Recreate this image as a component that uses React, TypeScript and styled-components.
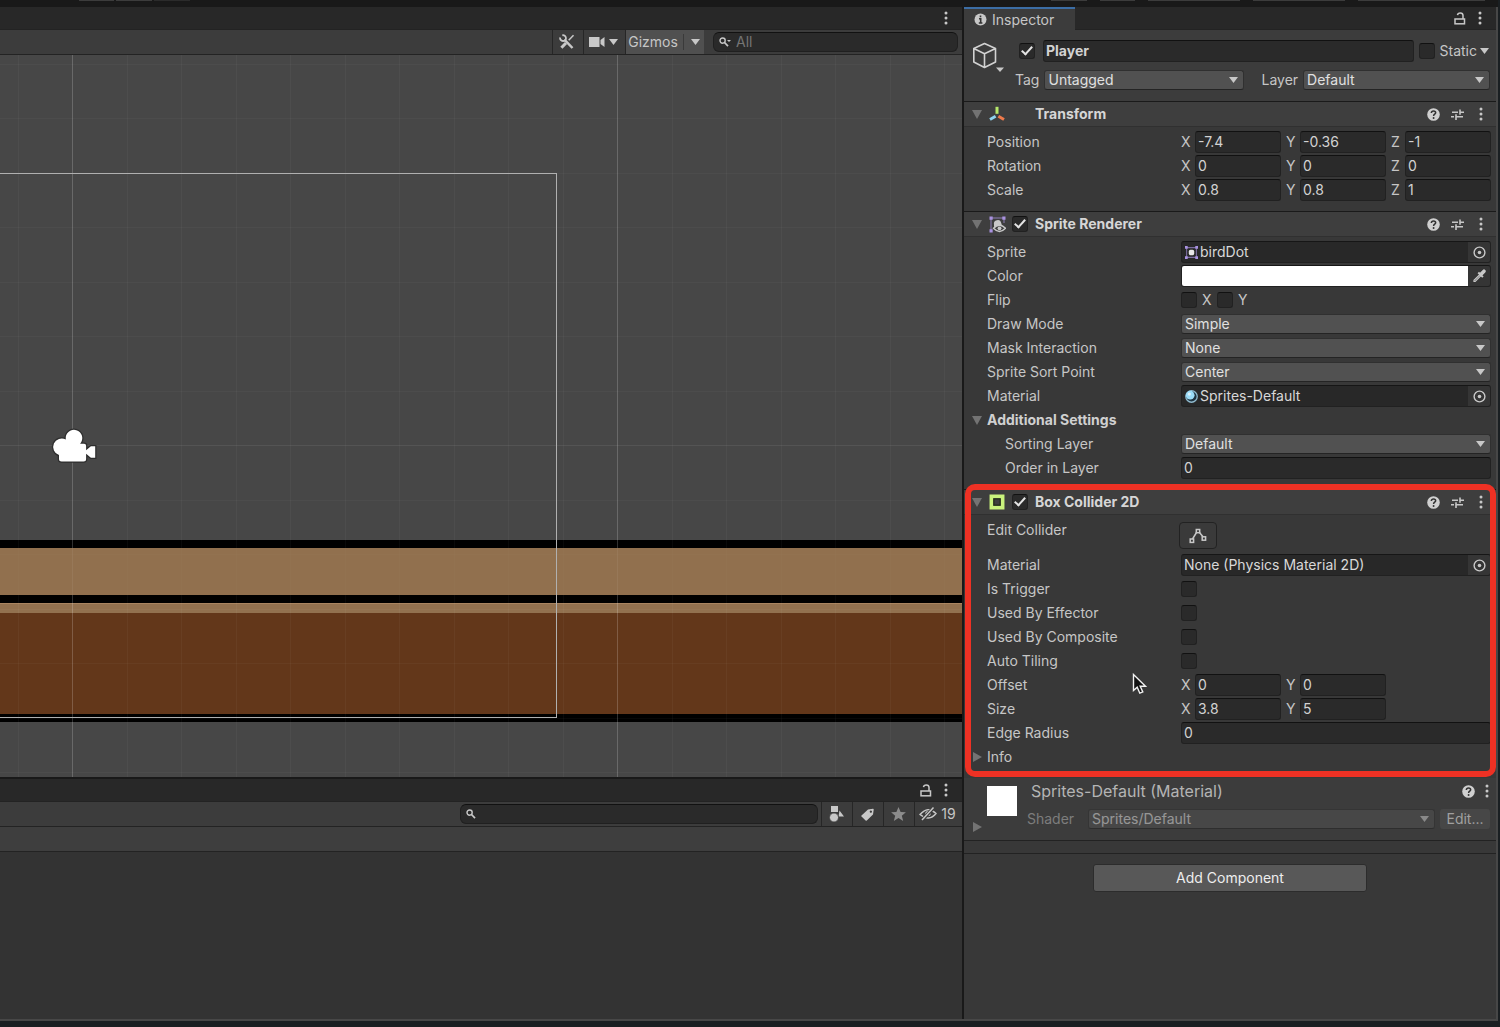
import React from "react";
import styled, { createGlobalStyle } from "styled-components";

const GlobalStyle = createGlobalStyle`
  *, *::before, *::after { box-sizing: border-box; }
  body {
    margin: 0;
    background: #1a1f22;
    color: #c6c6c6;
    font: 14px/20px Inter, "Liberation Sans", sans-serif;
  }
  button, input, select { font: inherit; color: inherit; margin: 0; }
  svg { display: block; flex: none; }
`;

/* ---------- window frame ---------- */

const Window = styled.div`
  display: flex;
  flex-direction: column;
  min-height: 100vh;
  padding: 0 2px 6px 0;
`;

const MainToolbar = styled.header`
  display: flex;
  justify-content: space-between;
  height: 7px;
  background: #191919;
  padding: 0 13px 0 79px;
`;

const ToolbarGroup = styled.div<{ $gap: number }>`
  display: flex;
  gap: ${(p) => p.$gap}px;
`;

const ToolbarStub = styled.span<{ $width: number; $dim?: boolean }>`
  width: ${(p) => p.$width}px;
  height: 1px;
  background: ${(p) => (p.$dim ? "#2b2b2b" : "#3c3c3c")};
`;

const Workspace = styled.main`
  flex: 1;
  display: grid;
  grid-template-columns: minmax(0, 1fr) 532px;
  gap: 2px;
  background: #191919;
  border: solid #474747;
  border-width: 0 2px 2px 0;
`;

const LeftColumn = styled.div`
  display: grid;
  grid-template-rows: minmax(0, 1fr) 240px;
  gap: 2px;
`;

const Panel = styled.section`
  display: flex;
  flex-direction: column;
  min-width: 0;
  background: #383838;
`;

const TabBar = styled.div`
  display: flex;
  align-items: center;
  justify-content: flex-end;
  gap: 4px;
  height: 23px;
  padding-right: 8px;
  background: #282828;
  border-bottom: 1px solid #232323;
`;

const Tab = styled.div`
  display: flex;
  align-items: center;
  gap: 5px;
  align-self: stretch;
  width: 111px;
  margin-right: auto;
  margin-bottom: -1px;
  padding-left: 10px;
  background: #3c3c3c;
  border-top: 2px solid #3c6ea6;
`;

const Toolbar = styled.div`
  display: flex;
  justify-content: flex-end;
  height: 25px;
  background: #3c3c3c;
  border-bottom: 1px solid #232323;
`;

const ToolButton = styled.button<{ $width: number; $on?: boolean }>`
  display: flex;
  align-items: center;
  justify-content: center;
  gap: 4px;
  width: ${(p) => p.$width}px;
  padding: 0 2px 0 0;
  border: 0;
  border-left: 1px solid #262626;
  background: ${(p) => (p.$on ? "#505050" : "transparent")};
`;

const Divider = styled.span`
  width: 1px;
  height: 16px;
  margin: 0 3px 0 1px;
  background: #3a3a3a;
`;

const SearchBox = styled.label<{ $width: number; $right: number }>`
  display: flex;
  align-items: center;
  gap: 5px;
  width: ${(p) => p.$width}px;
  height: 20px;
  margin: 2px ${(p) => p.$right}px 0 9px;
  padding: 0 5px;
  border: 1px solid #202020;
  border-top-color: #111;
  border-radius: 6px;
  background: #2a2a2a;
  input {
    flex: 1;
    min-width: 0;
    padding: 0;
    border: 0;
    outline: 0;
    background: transparent;
  }
  input::placeholder { color: #757575; opacity: 1; }
`;

const IconButton = styled.button`
  display: flex;
  align-items: center;
  justify-content: center;
  width: 16px;
  height: 16px;
  padding: 0;
  border: 0;
  background: none;
`;

const SceneCanvas = styled.div`
  flex: 1;
  min-height: 0;
  background: #474747;
  overflow: hidden;
`;

const Breadcrumbs = styled.div`
  height: 25px;
  background: #3e3e3e;
  border-bottom: 1px solid #232323;
`;

const AssetList = styled.div`
  flex: 1;
  background: #333;
`;

/* ---------- form controls ---------- */

const TextInput = styled.input<{ $strong?: boolean }>`
  flex: 1;
  width: 100%;
  min-width: 0;
  height: 22px;
  padding: 0 2px 2px;
  border: 1px solid #212121;
  border-top-color: #111;
  border-radius: 3px;
  outline: 0;
  background: #2a2a2a;
  color: #d2d2d2;
  font-weight: ${(p) => (p.$strong ? 700 : 400)};
`;

const CheckBox = styled.input.attrs({ type: "checkbox" })`
  appearance: none;
  display: flex;
  flex: none;
  justify-content: center;
  width: 16px;
  height: 16px;
  border: 1px solid #212121;
  border-top-color: #111;
  border-radius: 3px;
  background: #2a2a2a;
  &:checked::after {
    content: "";
    width: 6px;
    height: 11px;
    border: solid #e4e4e4;
    border-width: 0 2px 2px 0;
    transform: rotate(42deg);
  }
`;

const SelectWrap = styled.span<{ $grow?: number; $dim?: boolean }>`
  display: grid;
  flex: ${(p) => p.$grow ?? 1} 1 0;
  align-items: center;
  min-width: 0;
  opacity: ${(p) => (p.$dim ? 0.55 : 1)};
  > * { grid-area: 1 / 1; }
  > svg { justify-self: end; margin-right: 6px; pointer-events: none; }
`;

const SelectBox = styled.select`
  appearance: none;
  width: 100%;
  height: 20px;
  padding: 0 20px 0 3px;
  border: 1px solid #303030;
  border-bottom-color: #242424;
  border-radius: 3px;
  outline: 0;
  background: #515151;
  color: #e0e0e0;
  line-height: 18px;
  opacity: 1;
`;

const FieldBox = styled.span`
  display: flex;
  flex: 1;
  align-items: center;
  height: 22px;
  border: 1px solid #212121;
  border-top-color: #161616;
  border-radius: 3px;
  background: #282828;
  overflow: hidden;
  > svg { margin-left: 3px; }
  > input[type="text"] {
    flex: 1;
    min-width: 0;
    padding: 0 2px;
    border: 0;
    outline: 0;
    background: transparent;
    color: #d8d8d8;
  }
`;

const PickerButton = styled.button`
  display: flex;
  align-items: center;
  justify-content: center;
  width: 22px;
  height: 20px;
  padding: 0;
  border: 0;
  background: #353535;
`;

const ColorInput = styled.input.attrs({ type: "color" })`
  appearance: none;
  flex: 1;
  min-width: 0;
  height: 20px;
  padding: 0;
  border: 0;
  background: #fff;
  &::-webkit-color-swatch-wrapper { padding: 0; }
  &::-webkit-color-swatch { border: 0; }
`;

const WideButton = styled.button`
  width: 274px;
  height: 28px;
  margin: 10px auto 0;
  padding: 0;
  border: 1px solid #2c2c2c;
  border-radius: 3px;
  background: #585858;
  color: #eee;
`;

const ShapeButton = styled.button`
  display: flex;
  align-items: center;
  justify-content: center;
  width: 38px;
  height: 27px;
  margin: 4px 0 0 -2px;
  padding: 0;
  border: 1px solid #222;
  border-radius: 4px;
  background: #3a3a3a;
`;

const EditButton = styled.button`
  width: 50px;
  height: 20px;
  padding: 0;
  border: 0;
  border-radius: 3px;
  background: #474747;
  color: #a0a0a0;
`;

/* ---------- inspector ---------- */

const ObjectHeader = styled.div`
  display: flex;
  gap: 9px;
  padding: 10px 6px 11px 8px;
  background: #3c3c3c;
`;

const ObjectIcon = styled.button`
  display: flex;
  width: 34px;
  height: 34px;
  padding: 0;
  border: 0;
  background: none;
`;

const ObjectFields = styled.div`
  flex: 1;
  display: grid;
  gap: 8px;
`;

const ObjectRow = styled.div`
  display: flex;
  align-items: center;
  gap: 5px;
`;

const NameRow = styled(ObjectRow)`
  padding: 0 1px 0 4px;
  > input:first-child { margin-right: 3px; }
`;

const ObjectLabel = styled.label<{ $before?: number }>`
  display: flex;
  align-items: center;
  gap: 3px;
  margin-left: ${(p) => p.$before ?? 0}px;
`;

const ComponentBox = styled.section`
  position: relative;
  padding-bottom: 9px;
`;

const ComponentHeader = styled.div`
  display: flex;
  align-items: center;
  gap: 7px;
  height: 26px;
  margin-bottom: 3px;
  padding: 0 7px 0 8px;
  background: #3e3e3e;
  border-top: 1px solid #1a1a1a;
  border-bottom: 1px solid #303030;
`;

const ComponentTitle = styled.h2`
  flex: 1;
  margin: 0;
  font-size: 14px;
  font-weight: 700;
  color: #d6d6d6;
`;

const Slot = styled.span`
  display: flex;
  width: 16px;
`;

const HeaderActions = styled.span<{ $gap: number }>`
  display: flex;
  gap: ${(p) => p.$gap}px;
`;

const Row = styled.div<{ $height?: number }>`
  display: grid;
  grid-template-columns: 194px minmax(0, 1fr);
  height: ${(p) => p.$height ?? 24}px;
  padding: 0 5px 0 23px;
`;

const RowLabel = styled.label<{ $indent?: boolean }>`
  padding-left: ${(p) => (p.$indent ? 18 : 0)}px;
  line-height: 24px;
`;

const RowValue = styled.div`
  display: flex;
  align-items: center;
`;

const Vector = styled.div`
  flex: 1;
  display: grid;
  grid-template-columns: repeat(3, minmax(0, 1fr));
  gap: 5px;
`;

const Axis = styled.label`
  display: grid;
  grid-template-columns: 14px minmax(0, 1fr);
  align-items: center;
`;

const FlipLabel = styled.label`
  display: flex;
  align-items: center;
  gap: 5px;
  width: 36px;
`;

const Foldout = styled.button<{ $strong?: boolean }>`
  display: flex;
  align-items: center;
  gap: 5px;
  width: 100%;
  height: 24px;
  padding: 0 8px;
  border: 0;
  background: none;
  text-align: left;
  font-weight: ${(p) => (p.$strong ? 700 : 400)};
  color: ${(p) => (p.$strong ? "#d0d0d0" : "#c6c6c6")};
`;

const Highlight = styled.div`
  position: absolute;
  inset: -5px 0 1px 1px;
  border: 6px solid #ee3124;
  border-radius: 10px;
  pointer-events: none;
`;

const Pointer = styled.svg`
  position: absolute;
  left: 168px;
  top: 184px;
`;

const MaterialHeader = styled.section`
  display: grid;
  grid-template-columns: 46px minmax(0, 1fr);
  height: 63px;
  padding: 3px 1px 0 8px;
  gap: 9px;
  background: #3c3c3c;
  border-bottom: 1px solid #222;
`;

const Preview = styled.div`
  display: flex;
  flex-direction: column;
  gap: 6px;
  padding-top: 5px;
`;

const Swatch = styled.span`
  width: 30px;
  height: 30px;
  margin-left: 15px;
  background: #fff;
`;

const MaterialInfo = styled.div`
  display: grid;
  align-content: start;
  gap: 8px;
`;

const MaterialTitle = styled.h2`
  display: flex;
  align-items: center;
  justify-content: space-between;
  margin: 0;
  padding-left: 4px;
  font-size: 16px;
  font-weight: 400;
  color: #b4b4b4;
`;

const ShaderRow = styled.div`
  display: grid;
  grid-template-columns: 56px minmax(0, 1fr) auto;
  gap: 5px;
  align-items: center;
  padding-right: 5px;
`;

const ShaderLabel = styled.label`
  color: #7d7d7d;
`;

const Gap = styled.div`
  height: 13px;
  border-bottom: 1px solid #222;
`;

/* ---------- icons ---------- */

const light = "#c8c8c8";

const Caret = ({ size = 9 }: { size?: number }) => (
  <svg width={size} height="6" viewBox="0 0 10 6" preserveAspectRatio="none">
    <path d="M0 0h10L5 6z" fill={light} />
  </svg>
);

const FoldArrow = ({ open = true }: { open?: boolean }) => (
  <svg width="10" height="10" viewBox="0 0 10 10">
    <path d={open ? "M0 1h10L5 10z" : "M1 0v10l9-5z"} fill="#737373" />
  </svg>
);

const Dots = () => (
  <svg width="4" height="14" viewBox="0 0 4 14" fill={light}>
    <circle cx="2" cy="2" r="1.5" />
    <circle cx="2" cy="7" r="1.5" />
    <circle cx="2" cy="12" r="1.5" />
  </svg>
);

const Lock = () => (
  <svg width="12" height="13" viewBox="0 0 12 13" fill="none" stroke={light} strokeWidth="1.5">
    <rect x="1" y="7" width="9.5" height="4.8" />
    <path d="M9 7V3.6C9 1.9 8 1 6.3 1 4.600 1 3.700 1.700 3.500 3.100" />
  </svg>
);

const Info = () => (
  <svg width="13" height="13" viewBox="0 0 13 13">
    <circle cx="6.500" cy="6.500" r="6" fill={light} />
    <path d="M6.500 2.500v1.800M5 5.800h1.700v4M4.800 10h3.600" stroke="#333" strokeWidth="1.600" fill="none" />
  </svg>
);

const Help = () => (
  <svg width="13" height="13" viewBox="0 0 12 12">
    <circle cx="6" cy="6" r="5.800" fill="#d0d0d0" />
    <path d="M4 4.600C4.100 3.300 4.900 2.700 6 2.700s2 .7 2 1.700c0 1.300-1.900 1.400-1.900 2.900" stroke="#333" strokeWidth="1.400" fill="none" />
    <circle cx="6.100" cy="9.200" r=".9" fill="#333" />
  </svg>
);

const Presets = () => (
  <svg width="13" height="13" viewBox="0 0 13 13" stroke={light} strokeWidth="1.600" fill="none">
    <path d="M1 4.200h6M9 4.200h4M9 1.500v5.200M0 8.700h3M5 8.700h7M5 6.200v5.800" />
  </svg>
);

const SearchIcon = ({ menu }: { menu?: boolean }) => (
  <svg width="12" height="10" viewBox="0 0 12 10" fill="none" stroke={light}>
    <circle cx="3.600" cy="3.600" r="2.600" strokeWidth="1.400" />
    <path d="M5.500 5.500L9 9.200" strokeWidth="1.700" />
    {menu && <path d="M8 3h4l-2 2z" fill={light} stroke="none" />}
  </svg>
);

const Tools = () => (
  <svg width="16" height="16" viewBox="0 0 16 16" fill="none" stroke={light}>
    <path d="M14.500 1.200L9.700 6.200" strokeWidth="1.500" />
    <path d="M7 9L2.400 13.800" strokeWidth="3" />
    <path d="M5.400 5.600L13.500 14" strokeWidth="2.500" />
    <path d="M3.300 1.300A2.900 2.900 0 1 1 1.200 3.500" strokeWidth="1.800" />
  </svg>
);

const VideoIcon = () => (
  <svg width="16" height="12" viewBox="0 0 16 12" fill={light}>
    <path d="M0 1h10.500v10H0zM11.500 4L15.500 1v10L11.500 8z" />
  </svg>
);

const Shapes = () => (
  <svg width="15" height="17" viewBox="0 0 15 17" fill={light}>
    <path d="M2 0h7v6H2zM10.500 4.500L15 10.500h-5.500z" />
    <circle cx="5" cy="11.500" r="4.500" stroke="#3c3c3c" strokeWidth=".8" />
  </svg>
);

const Tag = () => (
  <svg width="13" height="13" viewBox="0 0 13 13">
    <path fillRule="evenodd" d="M7 1.500L12 .8q.8 0 .7.900L12 6.500 5.800 12.600q-.6.500-1.200 0L.5 8.600q-.6-.6 0-1.200zM9.800 2.500a1.100 1.100 0 1 0 .1 0z" fill={light} />
  </svg>
);

const Star = () => (
  <svg width="15" height="14" viewBox="0 0 15 14">
    <path d="M7.500 0l2.100 4.900 5.300.4-4.100 3.500L12.200 14l-4.700-2.900L2.800 14l1.400-5.200L.1 5.300l5.300-.4z" fill="#8c8c8c" />
  </svg>
);

const HiddenEye = () => (
  <svg width="18" height="14" viewBox="0 0 18 14" fill="none" stroke={light}>
    <path d="M1 7.500Q9-1.500 17 6.500 10 15 1 7.500z" strokeWidth="1.400" />
    <circle cx="9" cy="6.600" r="2.700" fill={light} stroke="none" />
    <path d="M3 13.200L14.500.8" stroke="#3c3c3c" strokeWidth="3.500" />
    <path d="M3 13L14.500.6" strokeWidth="1.500" />
  </svg>
);

const Cube = () => (
  <svg width="34" height="34" viewBox="0 0 34 34" fill="none" stroke="#d2d2d2" strokeWidth="1.600" strokeLinejoin="round">
    <path d="M12.500 3.500L23.500 8.500v13.500L12.500 27.500 1.800 22V8.500zM1.800 8.500l10.700 5.300 11-5.300M12.500 13.800v13.700" />
    <path d="M24 27.500h8l-4 4.500z" fill={light} stroke="none" />
  </svg>
);

const TransformIcon = () => (
  <svg width="16" height="16" viewBox="0 0 16 16" strokeWidth="3" fill="none">
    <path d="M8 .8v7" stroke="#b7e86b" />
    <path d="M6.600 10.300L1 13.500" stroke="#8fd3ee" />
    <path d="M9.400 10.300l5.600 3.200" stroke="#ee7a4b" />
  </svg>
);

const SpriteRendererIcon = () => (
  <svg width="17" height="17" viewBox="0 0 17 17" fill="none">
    <path d="M2 2h13M2 2v13M15 2v5" stroke="#8d7fb5" />
    <path d="M.5.500h3.200v3.200H.5zM13.300.500h3.200v3.200h-3.200zM.5 13.300h3.200v3.200H.5z" fill="#a992e0" />
    <path d="M5 8.500a3.600 3.600 0 0 1 7.200-1.500L13 9.500 5 11z" fill={light} />
    <path d="M4.500 12.300q6-6.300 12 0-6 6.300-12 0z" fill="#3e3e3e" stroke={light} strokeWidth="1.500" />
    <circle cx="10.500" cy="12.300" r="1.900" fill={light} />
  </svg>
);

const SpriteIcon = () => (
  <svg width="13" height="13" viewBox="0 0 12 12">
    <path d="M1.500 1.500h9v9h-9z" stroke="#7a6c9e" fill="none" />
    <path d="M0 0h2.500v2.500H0zM9.500 0H12v2.500H9.500zM0 9.500h2.500V12H0zM9.500 9.500H12V12H9.500z" fill="#a992e0" />
    <rect x="3.500" y="3.500" width="5" height="5" rx="1.500" fill="#e8e8e8" />
  </svg>
);

const MaterialIcon = () => (
  <svg width="13" height="13" viewBox="0 0 12 12">
    <circle cx="6" cy="6" r="5.300" fill="#1f3440" stroke="#8fb9cd" strokeWidth="1.200" />
    <circle cx="4.800" cy="4.800" r="4" fill="#9adcf8" />
    <circle cx="4" cy="3.800" r="1.500" fill="#d8f2fd" />
  </svg>
);

const BoxColliderIcon = () => (
  <svg width="16" height="16" viewBox="0 0 15 15">
    <path fillRule="evenodd" d="M.5.500h14v14H.5zM4 4v7h7V4z" fill="#c9f27c" />
    <rect x="4" y="4" width="7" height="7" fill="#26301a" />
    <rect x="5.200" y="5.200" width="4.600" height="4.600" fill="#3e3e3e" />
  </svg>
);

const Target = () => (
  <svg width="13" height="13" viewBox="0 0 13 13">
    <circle cx="6.500" cy="6.500" r="5.400" fill="none" stroke={light} strokeWidth="1.400" />
    <circle cx="6.500" cy="6.500" r="1.800" fill={light} />
  </svg>
);

const Dropper = () => (
  <svg width="14" height="14" viewBox="0 0 14 14" fill="none">
    <path d="M8.200 5.200L2 11.200V12.500h1.200L9.200 6.300" stroke={light} strokeWidth="1.200" />
    <path d="M6.300 3.500l4.600 4.600" stroke={light} strokeWidth="2" />
    <path d="M9 5.300L12 2.200" stroke={light} strokeWidth="3.500" strokeLinecap="round" />
  </svg>
);

const EditShape = () => (
  <svg width="18" height="16" viewBox="0 0 18 16" fill="none" stroke={light} strokeWidth="1.500">
    <path d="M7.500 4.500L3.500 11M10.500 4.500l3.700 4.500" />
    <rect x="7.300" y="1.500" width="3.400" height="3.200" />
    <rect x="1.200" y="11" width="3.400" height="3.400" />
    <rect x="13.200" y="8.800" width="3.400" height="3.400" />
  </svg>
);

/* ---------- scene drawing ---------- */

const columns = Array.from({ length: 60 }, (_, i) => 18 + i * 54.5);
const lines = Array.from({ length: 40 }, (_, i) => 9 + i * 54.5);

const SceneDrawing = () => (
  <svg width="100%" height="100%" role="img" aria-label="Scene" shapeRendering="crispEdges">
    <rect y="485" width="100%" height="182" fill="#000" />
    <rect y="493" width="100%" height="47" fill="#92714f" />
    <rect y="548" width="100%" height="10" fill="#92714f" />
    <rect y="548" width="100%" height="1" fill="#a88460" />
    <rect y="558" width="100%" height="101" fill="#63371a" />
    {columns.map((x, i) => (
      <rect key={x} x={Math.floor(x)} width="1" height="100%" fill="#fff" fillOpacity={i % 10 === 1 ? 0.19 : 0.035} />
    ))}
    {lines.map((y, i) => (
      <rect key={y} y={Math.floor(y)} width="100%" height="1" fill="#fff" fillOpacity={i === 7 ? 0.07 : 0.03} />
    ))}
    <rect y="493" width="100%" height="47" fill="#92714f" fillOpacity=".7" />
    <rect x="-20" y="118.500" width="576.500" height="544" fill="none" stroke="#b0b0b0" />
    <g shapeRendering="auto" stroke="#2e2e2e" strokeWidth="2.500" paintOrder="stroke" fill="#fff">
      <path d="M59 400a8.500 8.500 0 1 1 6.800-15.500 8.300 8.300 0 1 1 14.300 4.200h4q2 0 2 2v4.500l4.800-4h4.300v11.500h-4.300l-4.800-4v5.300q0 2.500-2.500 2.500H61.500q-2.500 0-2.500-2.500z" />
    </g>
  </svg>
);

/* ---------- composite parts ---------- */

type SelectProps = { id: string; value: string; grow?: number; dim?: boolean };

const Select = ({ id, value, grow, dim }: SelectProps) => (
  <SelectWrap $grow={grow} $dim={dim}>
    <SelectBox id={id} defaultValue={value}>
      <option>{value}</option>
    </SelectBox>
    <Caret />
  </SelectWrap>
);

type HeaderProps = { title: string; icon: React.ReactNode; toggle?: boolean };

const Header = ({ title, icon, toggle }: HeaderProps) => (
  <ComponentHeader>
    <FoldArrow />
    <Slot>{icon}</Slot>
    <Slot>{toggle && <CheckBox defaultChecked aria-label={`${title} enabled`} />}</Slot>
    <ComponentTitle>{title}</ComponentTitle>
    <HeaderActions $gap={8}>
      <IconButton aria-label="Help"><Help /></IconButton>
      <IconButton aria-label="Presets"><Presets /></IconButton>
      <IconButton aria-label="More"><Dots /></IconButton>
    </HeaderActions>
  </ComponentHeader>
);

type FieldProps = {
  label: string;
  id?: string;
  indent?: boolean;
  height?: number;
  children: React.ReactNode;
};

const Field = ({ label, id, indent, height, children }: FieldProps) => (
  <Row $height={height}>
    <RowLabel htmlFor={id} $indent={indent}>{label}</RowLabel>
    {height ? <div>{children}</div> : <RowValue>{children}</RowValue>}
  </Row>
);

const VectorField = ({ label, values }: { label: string; values: string[] }) => (
  <Row role="group" aria-label={label}>
    <RowLabel as="span">{label}</RowLabel>
    <RowValue>
      <Vector>
        {values.map((value, i) => (
          <Axis key={i}>
            {"XYZ"[i]}
            <TextInput type="text" defaultValue={value} />
          </Axis>
        ))}
      </Vector>
    </RowValue>
  </Row>
);

type ObjectFieldProps = { id: string; value: string; icon?: React.ReactNode };

const ObjectField = ({ id, value, icon }: ObjectFieldProps) => (
  <FieldBox>
    {icon}
    <input type="text" id={id} readOnly value={value} />
    <PickerButton aria-label="Select object"><Target /></PickerButton>
  </FieldBox>
);

const SceneView = () => (
  <Panel>
    <TabBar>
      <IconButton aria-label="Scene menu"><Dots /></IconButton>
    </TabBar>
    <Toolbar>
      <ToolButton $width={31} aria-label="Tools"><Tools /></ToolButton>
      <ToolButton $width={42} aria-label="Camera"><VideoIcon /><Caret /></ToolButton>
      <ToolButton $width={79} $on>Gizmos<Divider /><Caret /></ToolButton>
      <SearchBox $width={245} $right={4}>
        <SearchIcon menu />
        <input type="text" placeholder="All" aria-label="Search scene" />
      </SearchBox>
    </Toolbar>
    <SceneCanvas><SceneDrawing /></SceneCanvas>
  </Panel>
);

const ProjectView = () => (
  <Panel>
    <TabBar>
      <IconButton aria-label="Lock"><Lock /></IconButton>
      <IconButton aria-label="Project menu"><Dots /></IconButton>
    </TabBar>
    <Toolbar>
      <SearchBox $width={358} $right={3}>
        <SearchIcon />
        <input type="text" aria-label="Search project" />
      </SearchBox>
      <ToolButton $width={31} aria-label="Search by type"><Shapes /></ToolButton>
      <ToolButton $width={31} aria-label="Search by label"><Tag /></ToolButton>
      <ToolButton $width={31} aria-label="Favorites"><Star /></ToolButton>
      <ToolButton $width={48} aria-label="Hidden packages"><HiddenEye />19</ToolButton>
    </Toolbar>
    <Breadcrumbs />
    <AssetList />
  </Panel>
);

const Inspector = () => (
  <Panel as="aside">
    <TabBar>
      <Tab><Info />Inspector</Tab>
      <IconButton aria-label="Lock"><Lock /></IconButton>
      <IconButton aria-label="Inspector menu"><Dots /></IconButton>
    </TabBar>

    <ObjectHeader>
      <ObjectIcon aria-label="Select icon"><Cube /></ObjectIcon>
      <ObjectFields>
        <NameRow>
          <CheckBox defaultChecked aria-label="Active" />
          <TextInput $strong type="text" defaultValue="Player" aria-label="Name" />
          <CheckBox id="static" />
          <ObjectLabel htmlFor="static">Static<Caret /></ObjectLabel>
        </NameRow>
        <ObjectRow>
          <ObjectLabel htmlFor="tag">Tag</ObjectLabel>
          <Select id="tag" value="Untagged" grow={199} />
          <ObjectLabel htmlFor="layer" $before={12}>Layer</ObjectLabel>
          <Select id="layer" value="Default" grow={186} />
        </ObjectRow>
      </ObjectFields>
    </ObjectHeader>

    <ComponentBox>
      <Header title="Transform" icon={<TransformIcon />} />
      <VectorField label="Position" values={["-7.4", "-0.36", "-1"]} />
      <VectorField label="Rotation" values={["0", "0", "0"]} />
      <VectorField label="Scale" values={["0.8", "0.8", "1"]} />
    </ComponentBox>

    <ComponentBox>
      <Header title="Sprite Renderer" icon={<SpriteRendererIcon />} toggle />
      <Field label="Sprite" id="sprite">
        <ObjectField id="sprite" value="birdDot" icon={<SpriteIcon />} />
      </Field>
      <Field label="Color" id="color">
        <FieldBox>
          <ColorInput id="color" defaultValue="#ffffff" />
          <PickerButton aria-label="Pick color"><Dropper /></PickerButton>
        </FieldBox>
      </Field>
      <Field label="Flip">
        <FlipLabel><CheckBox />X</FlipLabel>
        <FlipLabel><CheckBox />Y</FlipLabel>
      </Field>
      <Field label="Draw Mode" id="draw-mode"><Select id="draw-mode" value="Simple" /></Field>
      <Field label="Mask Interaction" id="mask"><Select id="mask" value="None" /></Field>
      <Field label="Sprite Sort Point" id="sort-point"><Select id="sort-point" value="Center" /></Field>
      <Field label="Material" id="material">
        <ObjectField id="material" value="Sprites-Default" icon={<MaterialIcon />} />
      </Field>
      <Foldout $strong aria-expanded="true"><FoldArrow />Additional Settings</Foldout>
      <Field label="Sorting Layer" id="sorting-layer" indent><Select id="sorting-layer" value="Default" /></Field>
      <Field label="Order in Layer" id="order" indent><TextInput id="order" type="text" defaultValue="0" /></Field>
    </ComponentBox>

    <ComponentBox>
      <Header title="Box Collider 2D" icon={<BoxColliderIcon />} toggle />
      <Field label="Edit Collider" id="edit-collider" height={35}>
        <ShapeButton id="edit-collider"><EditShape /></ShapeButton>
      </Field>
      <Field label="Material" id="physics-material">
        <ObjectField id="physics-material" value="None (Physics Material 2D)" />
      </Field>
      <Field label="Is Trigger" id="is-trigger"><CheckBox id="is-trigger" /></Field>
      <Field label="Used By Effector" id="effector"><CheckBox id="effector" /></Field>
      <Field label="Used By Composite" id="composite"><CheckBox id="composite" /></Field>
      <Field label="Auto Tiling" id="auto-tiling"><CheckBox id="auto-tiling" /></Field>
      <VectorField label="Offset" values={["0", "0"]} />
      <VectorField label="Size" values={["3.8", "5"]} />
      <Field label="Edge Radius" id="edge-radius"><TextInput id="edge-radius" type="text" defaultValue="0" /></Field>
      <Foldout aria-expanded="false"><FoldArrow open={false} />Info</Foldout>
      <Highlight />
      <Pointer width="16" height="24" viewBox="0 0 16 24">
        <path d="M1.500 1.500v16l3.700-3.300 2.600 6 3-1.300-2.600-5.700h5.300z" fill="#111" stroke="#f2f2f2" strokeWidth="1.400" />
      </Pointer>
    </ComponentBox>

    <MaterialHeader>
      <Preview>
        <Swatch />
        <FoldArrow open={false} />
      </Preview>
      <MaterialInfo>
        <MaterialTitle>
          Sprites-Default (Material)
          <HeaderActions $gap={3}>
            <IconButton aria-label="Help"><Help /></IconButton>
            <IconButton aria-label="More"><Dots /></IconButton>
          </HeaderActions>
        </MaterialTitle>
        <ShaderRow>
          <ShaderLabel htmlFor="shader">Shader</ShaderLabel>
          <Select id="shader" value="Sprites/Default" dim />
          <EditButton>Edit...</EditButton>
        </ShaderRow>
      </MaterialInfo>
    </MaterialHeader>
    <Gap />
    <WideButton>Add Component</WideButton>
  </Panel>
);

export default function App() {
  return (
    <Window>
      <GlobalStyle />
      <MainToolbar>
        <ToolbarGroup $gap={2}>
          <ToolbarStub $width={35} />
          <ToolbarStub $width={36} />
          <ToolbarStub $width={36} $dim />
        </ToolbarGroup>
        <ToolbarGroup $gap={13}>
          <ToolbarStub $width={36} />
          <ToolbarStub $width={35} />
          <ToolbarStub $width={92} />
          <ToolbarStub $width={92} />
          <ToolbarStub $width={127} />
        </ToolbarGroup>
      </MainToolbar>
      <Workspace>
        <LeftColumn>
          <SceneView />
          <ProjectView />
        </LeftColumn>
        <Inspector />
      </Workspace>
    </Window>
  );
}
